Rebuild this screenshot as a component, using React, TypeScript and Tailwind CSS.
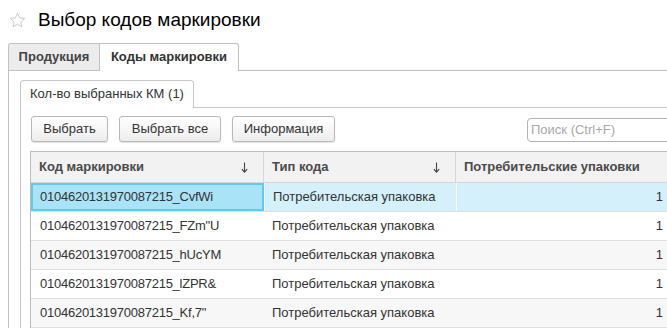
import React from 'react';

const rows = [
  '0104620131970087215_CvfWi',
  '0104620131970087215_FZm"U',
  '0104620131970087215_hUcYM',
  '0104620131970087215_lZPR&',
  '0104620131970087215_Kf,7"',
];

const StarIcon = () => (
  <svg width="17" height="17" viewBox="0 0 16 16" fill="none">
    <path
      d="M8 1.2l2 4.4 4.8.5-3.6 3.2 1 4.7L8 11.6 3.8 14l1-4.7L1.2 6.1 6 5.6z"
      stroke="#c8c8c8"
      strokeWidth="0.9"
      strokeLinejoin="round"
    />
  </svg>
);

const SortArrow = () => (
  <svg width="7" height="11" viewBox="0 0 7 11" fill="none">
    <path d="M3.5 0.5v9.5" stroke="#444" strokeWidth="1.1" />
    <path d="M0.8 7.2L3.5 10.2 6.2 7.2" stroke="#444" strokeWidth="1.1" />
  </svg>
);

const ToolButton: React.FC<{ label: string; width: string }> = ({ label, width }) => (
  <button
    className={`${width} h-[26px] rounded-[3px] border border-[#b8b8b8] bg-gradient-to-b from-white to-[#ededed] text-[13px] text-[#333] shadow-[0_1px_1px_rgba(0,0,0,0.12)]`}
  >
    {label}
  </button>
);

export default function App() {
  return (
    <div
      className="w-[667px] h-[328px] overflow-hidden bg-white text-[#333]"
      style={{ fontFamily: '"Liberation Sans", Arial, sans-serif' }}
    >
      {/* title */}
      <div className="flex items-center h-[43px] pl-[9px] pb-[3px]">
        <StarIcon />
        <span className="ml-[12px] text-[19px] text-black">Выбор кодов маркировки</span>
      </div>

      {/* outer tabs */}
      <div className="pl-[8px]">
        <div className="flex h-[27px] items-end">
          <div className="h-[27px] w-[92px] flex items-center justify-center border border-b-0 border-[#c2c2c2] bg-[#ececec] rounded-tl-[3px] text-[13px] font-bold text-[#444]">
            Продукция
          </div>
          <div className="relative h-[28px] w-[139px] flex items-center justify-center border border-l-0 border-b-0 border-[#c2c2c2] bg-white rounded-tr-[3px] text-[13px] font-bold text-[#333] -mb-px z-10 pb-px">
            Коды маркировки
          </div>
        </div>

        <div className="w-[800px] h-[300px] border-l border-t border-[#c2c2c2] pl-[11px] pt-[9px]">
          {/* inner tabs */}
          <div className="flex h-[27px] items-end">
            <div className="relative h-[28px] w-[174px] flex items-center justify-center border border-b-0 border-[#c8c8c8] bg-white rounded-t-[4px] text-[13px] text-[#333] -mb-px z-10 pb-px">
              Кол-во выбранных КМ (1)
            </div>
          </div>
          <div className="w-[800px] h-[260px] border-l border-t border-[#c8c8c8] pt-[8px] pl-[10px]">
            {/* toolbar */}
            <div className="flex items-center h-[26px]">
              <div className="flex gap-[11px]">
                <ToolButton label="Выбрать" width="w-[77px]" />
                <ToolButton label="Выбрать все" width="w-[102px]" />
                <ToolButton label="Информация" width="w-[103px]" />
              </div>
              <div className="ml-[192px] mt-[2px] h-[24px] w-[160px] rounded-[4px] border border-[#b3b3b3] bg-white pl-[3px] flex items-center text-[13px] text-[#a8a8a8]">
                Поиск (Ctrl+F)
              </div>
            </div>

            {/* table */}
            <div className="mt-[9px] -ml-[1px] w-[640px] border-l border-t border-[#bdbdbd] text-[13px]">
              <div className="grid grid-cols-[233px_192px_1fr] h-[31px] bg-[#f2f2f2] border-b border-[#d6d6d6] font-bold text-[#4a4a4a]">
                <div className="flex items-center justify-between pl-[8px] pr-[15px] border-r border-[#d6d6d6]">
                  <span>Код маркировки</span>
                  <SortArrow />
                </div>
                <div className="flex items-center justify-between pl-[8px] pr-[15px] border-r border-[#d6d6d6]">
                  <span>Тип кода</span>
                  <SortArrow />
                </div>
                <div className="flex items-center pl-[8px]">
                  <span>Потребительские упаковки</span>
                </div>
              </div>
              {rows.map((code, i) => {
                const selected = i === 0;
                const bg = selected ? 'bg-[#d3f0fb]' : i % 2 === 0 ? 'bg-[#f7f7f7]' : 'bg-white';
                return (
                  <div
                    key={code}
                    className={`grid grid-cols-[233px_192px_1fr] h-[29px] border-b border-[#e0e0e0] ${bg}`}
                  >
                    <div
                      className={
                        selected
                          ? 'flex items-center pl-[7px] tracking-[-0.25px] bg-[#a9e3f8] border-2 border-[#5ccbf2]'
                          : 'flex items-center pl-[9px] tracking-[-0.25px]'
                      }
                    >
                      {code}
                    </div>
                    <div
                      className={`flex items-center pl-[8px] ${selected ? 'border-l border-white' : ''}`}
                    >
                      Потребительская упаковка
                    </div>
                    <div
                      className={`flex items-center justify-end pr-[7px] ${selected ? 'border-l border-white' : ''}`}
                    >
                      1
                    </div>
                  </div>
                );
              })}
            </div>
          </div>
        </div>
      </div>
    </div>
  );
}
